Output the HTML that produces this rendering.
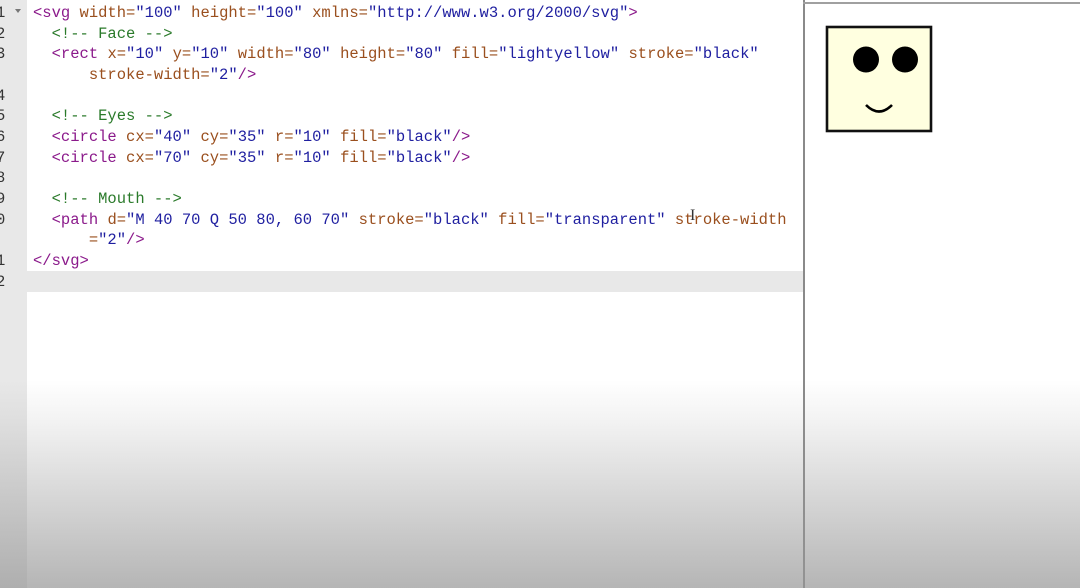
<!DOCTYPE html>
<html><head><style>
html,body{margin:0;padding:0;width:1080px;height:588px;overflow:hidden;background:#fff;position:relative}
#gut{position:absolute;left:0;top:0;width:27px;height:588px;background:#e8e8e8}
#hl{position:absolute;left:27px;top:271px;width:776px;height:21px;background:#e8e8e8}
#div{position:absolute;left:803px;top:0;width:2px;height:588px;background:#8a8a8a}
#divt{position:absolute;left:803px;top:2px;width:277px;height:2px;background:#a0a0a0}
.code{position:absolute;top:3px;font-family:"Liberation Mono",monospace;font-size:15.5px;line-height:20.65px;white-space:pre}
#nums{left:-4px;color:#333}
#src{left:33px}
.t{color:#8b1a8b}.a{color:#9a4f1e}.s{color:#1f1fa0}.c{color:#2a7a2a}
#grad{position:absolute;left:0;top:380px;width:1080px;height:208px;background:linear-gradient(rgba(150,150,150,0),rgba(150,150,150,0.12) 20%,rgba(150,150,150,0.7))}
</style></head><body>
<div id="gut"></div><div id="hl"></div>
<div class="code" id="nums">1
2
3

4
5
6
7
8
9
0

1
2</div>
<div style="position:absolute;left:15px;top:9px;width:0;height:0;border-left:3px solid transparent;border-right:3px solid transparent;border-top:4px solid #777"></div>
<div class="code" id="src"><span class="t">&lt;svg</span> <span class="a">width=</span><span class="s">"100"</span> <span class="a">height=</span><span class="s">"100"</span> <span class="a">xmlns=</span><span class="s">"http://www.w3.org/2000/svg"</span><span class="t">&gt;</span>
  <span class="c">&lt;!-- Face --&gt;</span>
  <span class="t">&lt;rect</span> <span class="a">x=</span><span class="s">"10"</span> <span class="a">y=</span><span class="s">"10"</span> <span class="a">width=</span><span class="s">"80"</span> <span class="a">height=</span><span class="s">"80"</span> <span class="a">fill=</span><span class="s">"lightyellow"</span> <span class="a">stroke=</span><span class="s">"black"</span>
      <span class="a">stroke-width=</span><span class="s">"2"</span><span class="t">/&gt;</span>

  <span class="c">&lt;!-- Eyes --&gt;</span>
  <span class="t">&lt;circle</span> <span class="a">cx=</span><span class="s">"40"</span> <span class="a">cy=</span><span class="s">"35"</span> <span class="a">r=</span><span class="s">"10"</span> <span class="a">fill=</span><span class="s">"black"</span><span class="t">/&gt;</span>
  <span class="t">&lt;circle</span> <span class="a">cx=</span><span class="s">"70"</span> <span class="a">cy=</span><span class="s">"35"</span> <span class="a">r=</span><span class="s">"10"</span> <span class="a">fill=</span><span class="s">"black"</span><span class="t">/&gt;</span>

  <span class="c">&lt;!-- Mouth --&gt;</span>
  <span class="t">&lt;path</span> <span class="a">d=</span><span class="s">"M 40 70 Q 50 80, 60 70"</span> <span class="a">stroke=</span><span class="s">"black"</span> <span class="a">fill=</span><span class="s">"transparent"</span> <span class="a">stroke-width</span>
      <span class="a">=</span><span class="s">"2"</span><span class="t">/&gt;</span>
<span class="t">&lt;/svg&gt;</span>
</div>
<div id="div"></div><div id="divt"></div>
<svg style="position:absolute;left:814px;top:14px" width="130" height="130" viewBox="0 0 100 100">
<rect x="10" y="10" width="80" height="80" fill="lightyellow" stroke="#111" stroke-width="2"/>
<circle cx="40" cy="35" r="10" fill="black"/>
<circle cx="70" cy="35" r="10" fill="black"/>
<path d="M 40 70 Q 50 80, 60 70" stroke="black" fill="transparent" stroke-width="2"/>
</svg>
<div style="position:absolute;left:690px;top:207px;font:16px 'Liberation Serif',serif;color:#333">I</div>
<div id="grad"></div>
</body></html>
